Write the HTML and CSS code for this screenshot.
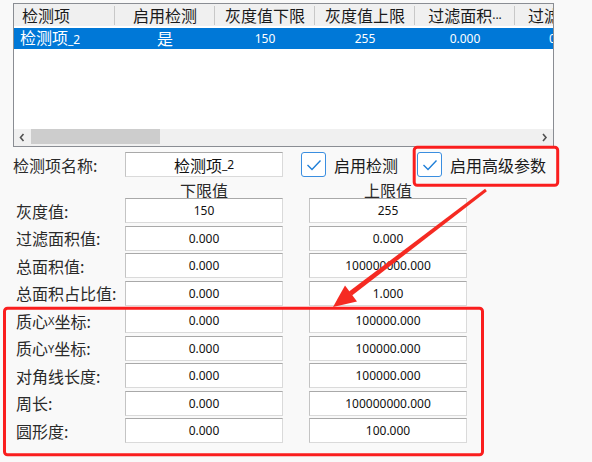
FILE: index.html
```html
<!DOCTYPE html>
<html lang="zh-CN">
<head>
<meta charset="utf-8">
<title>检测项</title>
<link rel="stylesheet" href="styles.css">
</head>
<body>
<div class="page">
  <div class="list">
    <div class="hdr">
      <div class="hc first">检测项</div>
      <div class="hc">启用检测</div>
      <div class="hc">灰度值下限</div>
      <div class="hc">灰度值上限</div>
      <div class="hc">过滤面积<span class="n">...</span></div>
      <div class="hc last">过滤<span class="n">...</span></div>
    </div>
    <div class="row sel">
      <div class="rc first"><span>检测项<span class="n">_2</span></span></div>
      <div class="rc">是</div>
      <div class="rc n">150</div>
      <div class="rc n">255</div>
      <div class="rc n">0.000</div>
      <div class="rc n last">0</div>
    </div>
    <div class="fill"></div>
    <div class="hscroll">
      <div class="arr"><svg width="17" height="17" viewBox="0 0 17 17"><path d="M9.5 5 L6.5 8.5 L9.5 12" fill="none" stroke="#505050" stroke-width="1.6"/></svg></div>
      <div class="track"><div class="thumb"></div></div>
      <div class="arr"><svg width="17" height="17" viewBox="0 0 17 17"><path d="M7 5 L10 8.5 L7 12" fill="none" stroke="#505050" stroke-width="1.6"/></svg></div>
    </div>
  </div>

  <div class="form">
    <div class="lbl name">检测项名称:</div>
    <div class="box">检测项<span class="n">_2</span></div>
    <div class="checks">
      <span class="cb"><svg width="24" height="24" viewBox="0 0 24 24"><path d="M5.5 12 L10 16.5 L18.5 7.5" fill="none" stroke="#1f7fd8" stroke-width="1.4"/></svg></span>
      <span class="cbt">启用检测</span>
      <span class="cb cb2"><svg width="24" height="24" viewBox="0 0 24 24"><path d="M5.5 12 L10 16.5 L18.5 7.5" fill="none" stroke="#1f7fd8" stroke-width="1.4"/></svg></span>
      <span class="cbt">启用高级参数</span>
    </div>

    <div></div>
    <div class="head">下限值</div>
    <div></div>
    <div class="head">上限值</div>

    <div class="lbl">灰度值:</div><div class="box n">150</div><div></div><div class="box n">255</div>
    <div class="lbl">过滤面积值:</div><div class="box n">0.000</div><div></div><div class="box n">0.000</div>
    <div class="lbl">总面积值:</div><div class="box n">0.000</div><div></div><div class="box n">100000000.000</div>
    <div class="lbl">总面积占比值:</div><div class="box n">0.000</div><div></div><div class="box n">1.000</div>
    <div class="lbl">质心<span class="sm">X</span>坐标:</div><div class="box n">0.000</div><div></div><div class="box n">100000.000</div>
    <div class="lbl">质心<span class="sm">Y</span>坐标:</div><div class="box n">0.000</div><div></div><div class="box n">100000.000</div>
    <div class="lbl">对角线长度:</div><div class="box n">0.000</div><div></div><div class="box n">100000.000</div>
    <div class="lbl">周长:</div><div class="box n">0.000</div><div></div><div class="box n">100000000.000</div>
    <div class="lbl">圆形度:</div><div class="box n">0.000</div><div></div><div class="box n">100.000</div>
  </div>

  <svg class="annot" width="592" height="462" viewBox="0 0 592 462">
    <rect x="414.2" y="147.3" width="143.5" height="38" rx="3" fill="none" stroke="#fa1e1e" stroke-width="3"/>
    <rect x="4.5" y="308.3" width="478" height="146.5" rx="3" fill="none" stroke="#fa1e1e" stroke-width="3"/>
    <polygon points="486.9,191.2 485.1,188.8 349,291.6 352,295.6" fill="#f52a22"/>
    <polygon points="333,307 345,285.5 357,301.5" fill="#f52a22"/>
  </svg>
</div>
</body>
</html>
```

FILE: styles.css
```css
html, body {
  margin: 0;
  padding: 0;
  background: #f9f9f9;
}

.page {
  position: relative;
  width: 592px;
  height: 462px;
  overflow: hidden;
  font-family: "Noto Sans CJK SC", "Noto Sans", sans-serif;
  font-size: 16px;
  color: #1e1e1e;
}

.n {
  font-family: "Noto Sans", "Noto Sans CJK SC", sans-serif;
  font-size: 12px;
}

.sm {
  font-family: "Noto Sans", sans-serif;
  font-size: 11px;
}

/* list view */
.list {
  margin: 3px 0 0 13px;
  width: 539px;
  height: 142px;
  border: 1px solid #8a8d93;
  background: #ffffff;
  display: flex;
  flex-direction: column;
  overflow: hidden;
}

.hdr {
  display: grid;
  grid-template-columns: 101px 100px 100px 100px 100px 38px;
  height: 22px;
  background: #f0f0f0;
  flex: none;
}

.hc {
  display: flex;
  align-items: center;
  justify-content: center;
  line-height: 22px;
  white-space: nowrap;
  overflow: hidden;
  position: relative;
  color: #1a1a1a;
}

.hc::after {
  content: "";
  position: absolute;
  right: 0;
  top: 2px;
  bottom: 1px;
  width: 1px;
  background: #c8c8c8;
}

.hc.first {
  justify-content: flex-start;
  padding-left: 8px;
}

.hc.last {
  justify-content: flex-start;
  padding-left: 13px;
}

.hc.last::after { display: none; }

.row {
  display: grid;
  grid-template-columns: 101px 100px 100px 100px 100px 38px;
  height: 21px;
  margin-top: 2px;
  flex: none;
}

.row.sel {
  background: #0078d7;
  color: #ffffff;
}

.rc {
  display: flex;
  align-items: center;
  justify-content: center;
  white-space: nowrap;
  overflow: hidden;
  line-height: 21px;
}

.rc.first {
  justify-content: flex-start;
  padding-left: 6px;
}

.rc.last {
  justify-content: flex-start;
  padding-left: 34px;
}

.fill { flex: 1; }

.hscroll {
  display: flex;
  height: 17px;
  background: #f0f0f0;
  flex: none;
}

.arr {
  width: 17px;
  height: 17px;
  flex: none;
}

.arr svg { display: block; }

.track {
  flex: 1;
}

.thumb {
  width: 129px;
  height: 15px;
  background: #cdcdcd;
}

/* form */
.form {
  display: grid;
  grid-template-columns: 112px 158px 26px 158px;
  grid-template-rows: 25px 16px repeat(9, 25px);
  row-gap: 2.5px;
  margin: 5px 0 0 13px;
}

.lbl {
  display: flex;
  align-items: center;
  padding-left: 3px;
  white-space: nowrap;
  color: #2a2a2a;
}

.lbl.name { padding-left: 0; }

.box {
  box-sizing: border-box;
  height: 25px;
  background: #ffffff;
  border: 1px solid #dadada;
  border-top-color: #a9a9a9;
  border-left-color: #c4c4c4;
  display: flex;
  align-items: center;
  justify-content: center;
  white-space: nowrap;
  color: #111;
}

.box.n { font-size: 12px; }

.checks {
  grid-column: 3 / span 2;
  display: flex;
  align-items: center;
  padding-left: 18px;
  white-space: nowrap;
  color: #1a1a1a;
}

.cb {
  box-sizing: border-box;
  width: 25px;
  height: 25px;
  border: 1px solid #3a8ee0;
  border-radius: 3px;
  background: #ffffff;
  flex: none;
}

.cb svg { display: block; }

.cbt { margin-left: 8px; }

.cb2 { margin-left: 19px; }

.head {
  text-align: center;
  line-height: 20px;
  height: 16px;
  white-space: nowrap;
  color: #2a2a2a;
}

.annot {
  position: absolute;
  left: 0;
  top: 0;
  pointer-events: none;
}
```
